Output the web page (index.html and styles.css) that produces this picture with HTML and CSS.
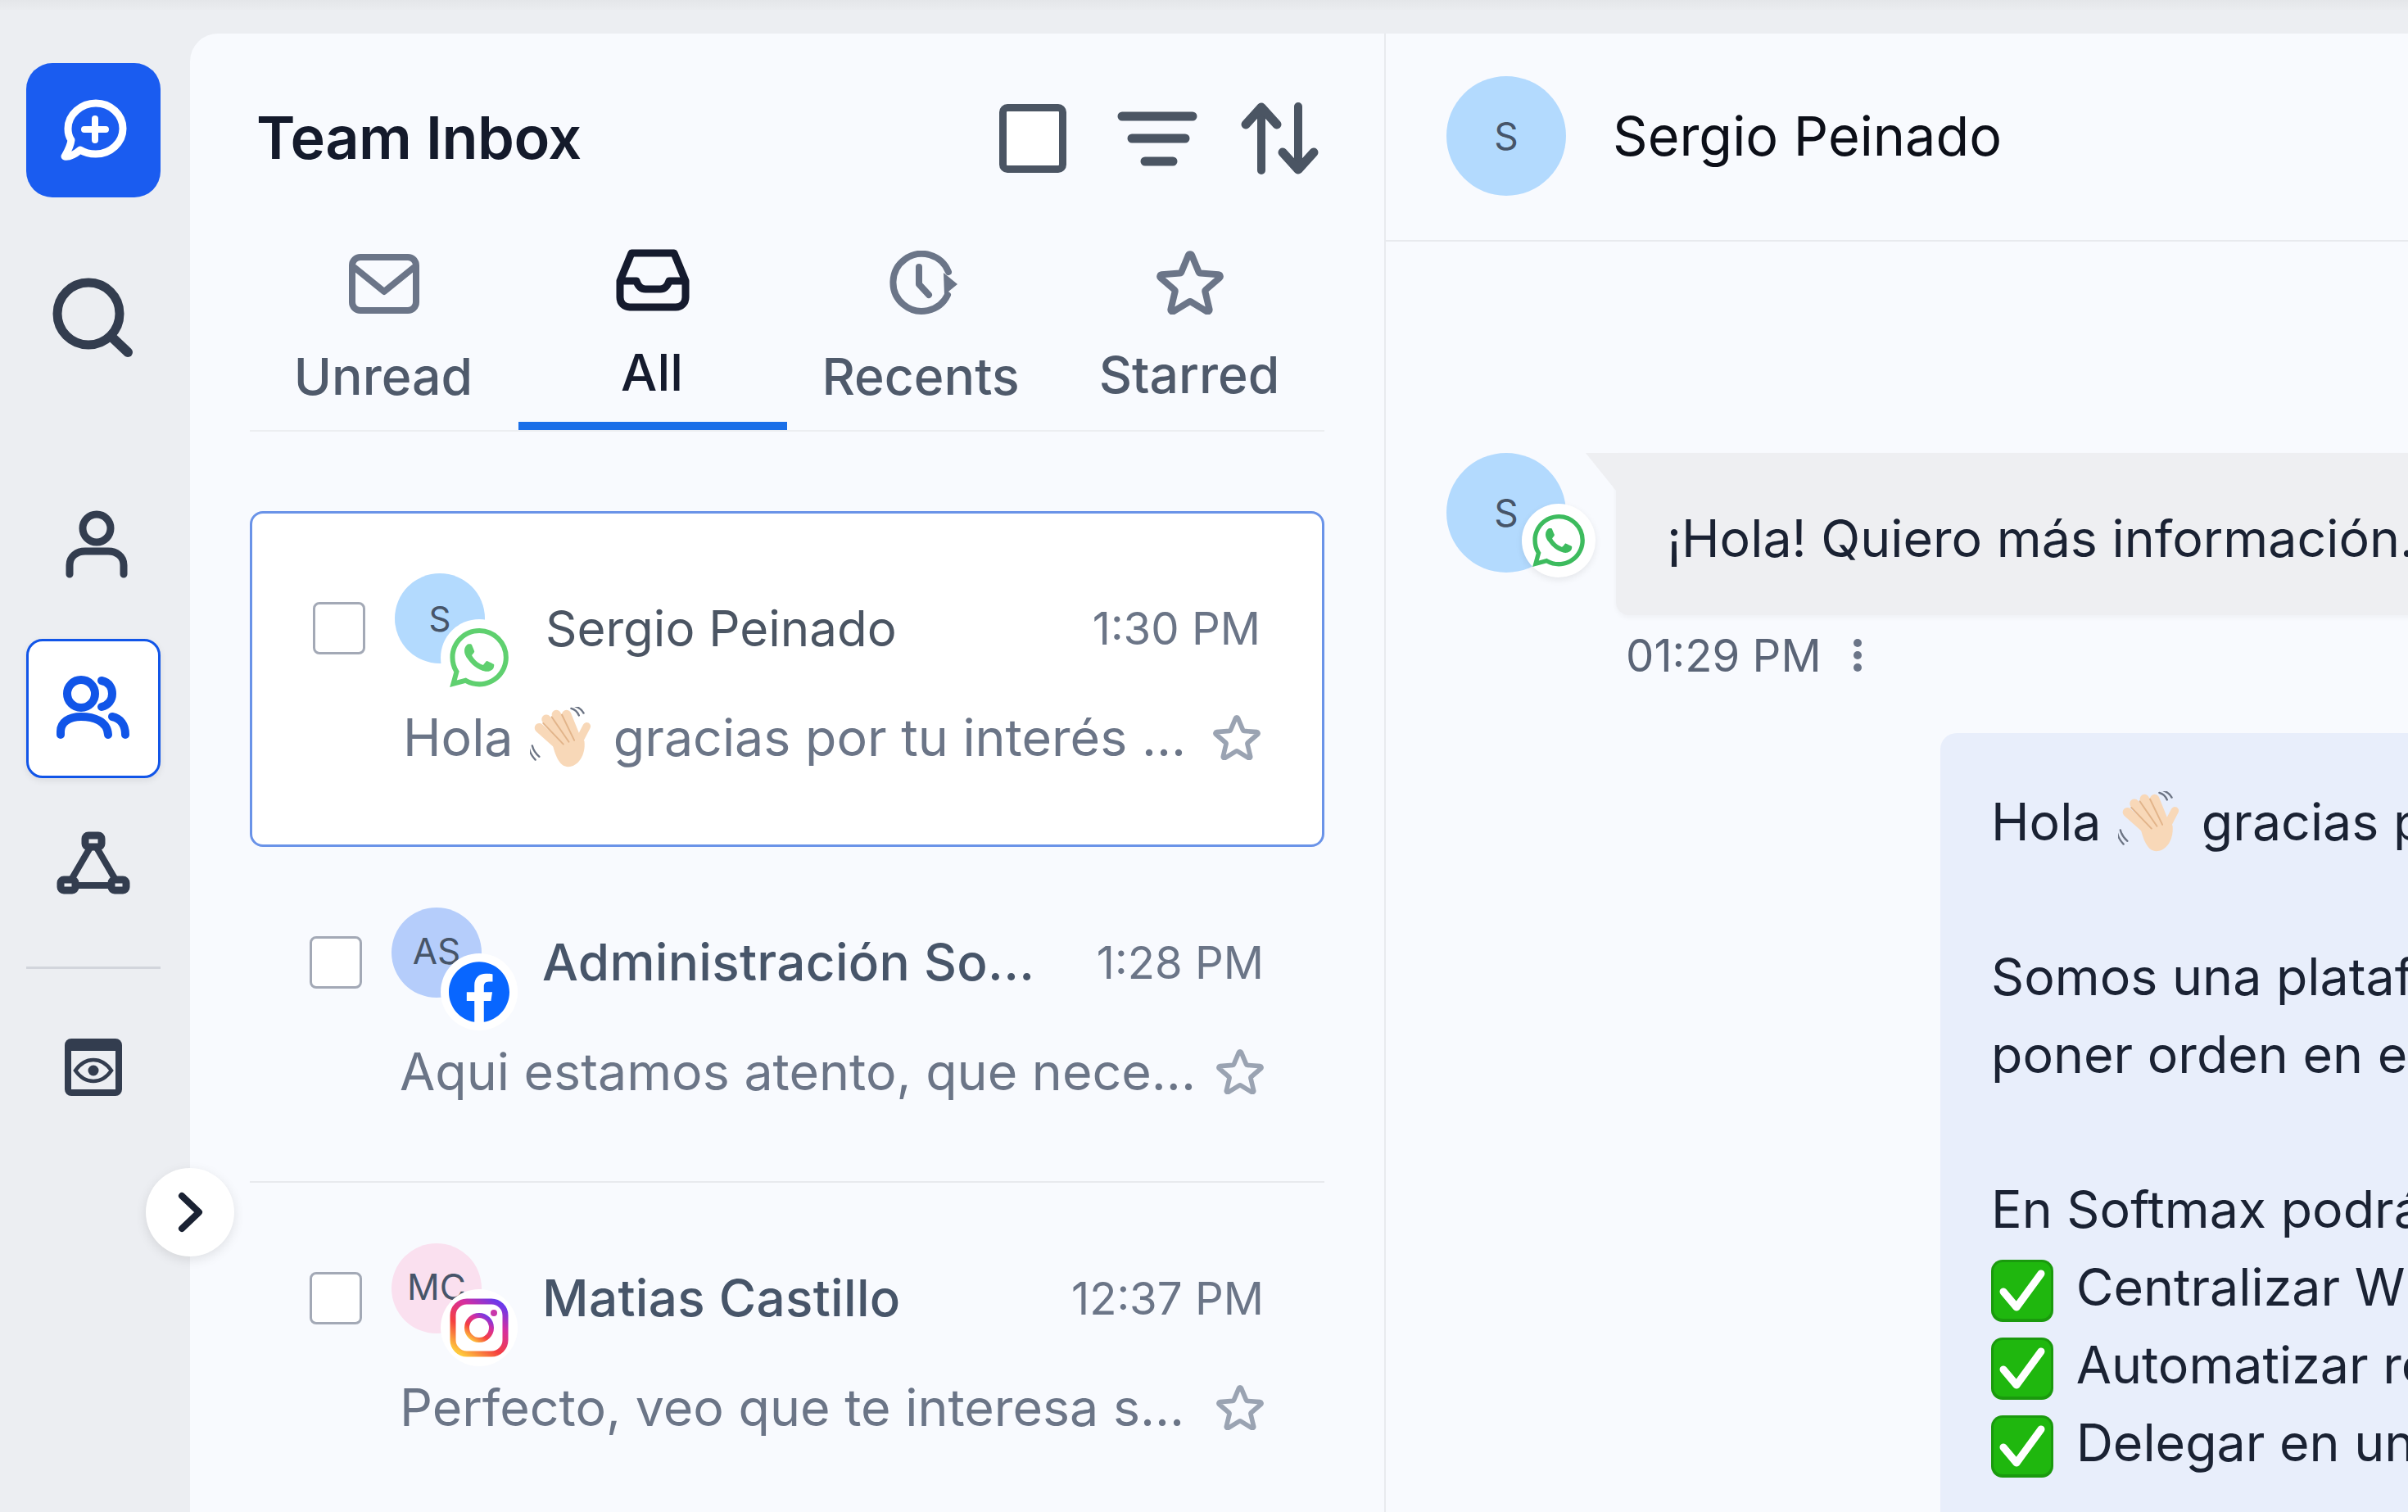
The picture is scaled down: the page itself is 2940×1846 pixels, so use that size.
FILE: index.html
```html
<!DOCTYPE html>
<html lang="en">
<head>
    <meta charset="UTF-8">
    <meta name="viewport" content="width=device-width, initial-scale=1.0">
    <title>Team Inbox</title>
    <link rel="stylesheet" href="styles.css">
</head>
<body>
    <svg class="defs" width="0" height="0">
        <defs>
            <symbol id="star" viewBox="1.8 2.2 20.4 19.2">
                <path fill="none" stroke="currentColor" stroke-width="2" stroke-linejoin="round" d="M11.48 3.499a.562.562 0 011.04 0l2.125 5.111a.563.563 0 00.475.345l5.518.442c.499.04.701.663.321.988l-4.204 3.602a.563.563 0 00-.182.557l1.285 5.385a.562.562 0 01-.84.61l-4.725-2.885a.562.562 0 00-.586 0L6.982 20.54a.562.562 0 01-.84-.61l1.285-5.386a.562.562 0 00-.182-.557l-4.204-3.602a.563.563 0 01.321-.988l5.518-.442a.563.563 0 00.475-.345L11.48 3.5z"/>
            </symbol>
            <symbol id="whatsapp" viewBox="0 0 24 24">
                <path fill="currentColor" d="M17.472 14.382c-.297-.149-1.758-.867-2.03-.967-.273-.099-.471-.148-.67.15-.197.297-.767.966-.94 1.164-.173.199-.347.223-.644.075-.297-.15-1.255-.463-2.39-1.475-.883-.788-1.48-1.761-1.653-2.059-.173-.297-.018-.458.13-.606.134-.133.298-.347.446-.52.149-.174.198-.298.298-.497.099-.198.05-.371-.025-.52-.075-.149-.669-1.612-.916-2.207-.242-.579-.487-.5-.669-.51-.173-.008-.371-.01-.57-.01-.198 0-.52.074-.792.372-.272.297-1.04 1.016-1.04 2.479 0 1.462 1.065 2.875 1.213 3.074.149.198 2.096 3.2 5.077 4.487.709.306 1.262.489 1.694.625.712.227 1.36.195 1.871.118.571-.085 1.758-.719 2.006-1.413.248-.694.248-1.289.173-1.413-.074-.124-.272-.198-.57-.347m-5.421 7.403h-.004a9.87 9.87 0 01-5.031-1.378l-.361-.214-3.741.982.998-3.648-.235-.374a9.86 9.86 0 01-1.51-5.26c.001-5.45 4.436-9.884 9.888-9.884 2.64 0 5.122 1.03 6.988 2.898a9.825 9.825 0 012.893 6.994c-.003 5.45-4.437 9.884-9.885 9.884m8.413-18.297A11.815 11.815 0 0012.05 0C5.495 0 .16 5.335.157 11.892c0 2.096.547 4.142 1.588 5.945L.057 24l6.305-1.654a11.882 11.882 0 005.683 1.448h.005c6.554 0 11.89-5.335 11.893-11.893a11.821 11.821 0 00-3.48-8.413z"/>
            </symbol>
            <symbol id="wave" viewBox="0 0 80 80">
                <g fill="none" stroke-linecap="round">
                    <path stroke="#f8d8b8" stroke-width="12" d="M12 27L40 52M21 16L46 46M34 10L53 44M47 10L60 42"/>
                    <path stroke="#f8d8b8" stroke-width="10" d="M73 25L60 50"/>
                </g>
                <path fill="#f8d8b8" d="M28 44L58 34L70 44C72 62 62 77 49 77C39 77 33 66 28 44Z"/>
                <g fill="none" stroke-linecap="round">
                    <path stroke="#e2b48a" stroke-width="2" d="M17 21L43 48M28 13L50 45M41 10L57 43"/>
                    <path stroke="#6c7484" stroke-width="2.5" d="M53 2Q60 4 63 11M58 -1Q66 2 69 8M3 50Q5 58 12 64M-1 54Q1 62 7 68"/>
                </g>
            </symbol>
            <symbol id="check" viewBox="0 0 76 76">
                <rect x="0" y="0" width="76" height="76" rx="14" fill="#1a9a0d"/>
                <rect x="3" y="3" width="70" height="69" rx="11" fill="#1fb70e"/>
                <path fill="none" stroke="#fff" stroke-width="9" stroke-linecap="round" stroke-linejoin="round" d="M15 39L31 58L61 17"/>
            </symbol>
        </defs>
    </svg>

    <div class="topbar"></div>

    <div class="app">
        <nav class="rail">
            <div class="rail-btn compose">
                <svg width="84" height="78" viewBox="0 0 84 78"><path fill="none" stroke="#fff" stroke-width="9" stroke-linejoin="round" d="M45 6C63 6 78 20 78 37C78 54 63 68 45 68C38 68 32 67 26 63C20 68 13 72 7 71C11 64 14 59 15 51C12 47 11 42 11 37C11 20 27 6 45 6Z"/><path stroke="#fff" stroke-width="8" stroke-linecap="round" d="M44 25V51M31 38H57"/></svg>
            </div>
            <div class="rail-btn search">
                <svg width="100" height="100" viewBox="0 0 100 100"><circle cx="45" cy="45" r="38" fill="none" stroke="#333d4f" stroke-width="11"/><path stroke="#333d4f" stroke-width="12" stroke-linecap="round" d="M74 74L93 92"/></svg>
            </div>
            <div class="rail-btn person">
                <svg width="76" height="84" viewBox="0 0 76 84"><circle cx="38" cy="22" r="17" fill="none" stroke="#333d4f" stroke-width="9"/><path fill="none" stroke="#333d4f" stroke-width="9" stroke-linecap="round" d="M5 78V67C5 56 14 50 24 50H52C62 50 71 56 71 67V78"/></svg>
            </div>
            <div class="rail-btn team">
                <svg width="90" height="80" viewBox="0 0 90 80"><circle cx="30" cy="22" r="17" fill="none" stroke="#1155e8" stroke-width="10"/><path fill="none" stroke="#1155e8" stroke-width="10" stroke-linecap="round" d="M55 6C65 8 68 16 68 22C68 30 63 36 55 38M5 72V68C5 57 15 50 30 50C45 50 62 55 63 72M68 50C78 52 84 60 84 72"/></svg>
            </div>
            <div class="rail-btn network">
                <svg width="90" height="80" viewBox="0 0 90 80"><path fill="none" stroke="#333d4f" stroke-width="8" d="M45 13L14 66H76Z"/><rect x="35" y="5" width="20" height="14" rx="4" fill="#eceef2" stroke="#333d4f" stroke-width="9"/><rect x="5" y="59" width="18" height="13" rx="4" fill="#eceef2" stroke="#333d4f" stroke-width="9"/><rect x="67" y="59" width="18" height="13" rx="4" fill="#eceef2" stroke="#333d4f" stroke-width="9"/></svg>
            </div>
            <div class="rail-line"></div>
            <div class="rail-btn preview-btn">
                <svg width="70" height="70" viewBox="0 0 70 70"><rect x="4" y="4" width="62" height="62" rx="4" fill="none" stroke="#333d4f" stroke-width="8"/><rect x="3" y="3" width="64" height="12" rx="3" fill="#333d4f"/><path fill="none" stroke="#333d4f" stroke-width="4.5" d="M13 39C20 29 27 26 35 26C43 26 50 29 57 39C50 49 43 52 35 52C27 52 20 49 13 39Z"/><circle cx="35" cy="39" r="6.5" fill="#333d4f"/></svg>
            </div>
        </nav>

        <main class="panel">
            <section class="inbox">
                <header class="inbox-head">
                    <h1>Team Inbox</h1>
                    <div class="head-icons">
                        <span class="box-big"></span>
                        <svg width="100" height="70" viewBox="0 0 100 70"><path stroke="#4b5563" stroke-width="11" stroke-linecap="round" d="M8 8H94M20 35H85M36 63H70"/></svg>
                        <svg width="95" height="88" viewBox="0 0 95 88"><path fill="none" stroke="#4b5563" stroke-width="10" stroke-linecap="round" d="M25 83V8M70 5V80"/><path fill="none" stroke="#4b5563" stroke-width="11" stroke-linecap="round" stroke-linejoin="round" d="M6 27L25 6L44 27M51 61L70 82L89 61"/></svg>
                    </div>
                </header>

                <div class="tabs">
                    <div class="tab">
                        <svg width="90" height="80" viewBox="0 0 90 80"><rect x="6" y="8" width="78" height="65" rx="10" fill="none" stroke="#6b7588" stroke-width="8"/><path fill="none" stroke="#6b7588" stroke-width="8" stroke-linejoin="round" d="M8 20L45 50L82 20"/></svg>
                        <span>Unread</span>
                    </div>
                    <div class="tab active">
                        <svg width="90" height="80" viewBox="0 0 90 80"><path fill="none" stroke="#151b2e" stroke-width="9" stroke-linejoin="round" d="M19 8H71L85 42V62C85 69 80 74 73 74H17C10 74 5 69 5 62V42Z"/><path fill="none" stroke="#151b2e" stroke-width="9" stroke-linecap="round" stroke-linejoin="round" d="M6 42H25C27 48 30 52 36 52H54C60 52 63 48 65 42H84"/></svg>
                        <span>All</span>
                    </div>
                    <div class="tab">
                        <svg width="90" height="80" viewBox="0 0 90 80"><path fill="none" stroke="#6b7588" stroke-width="8" stroke-linecap="round" d="M78 26A35 35 0 1 0 77 54"/><path fill="none" stroke="#6b7588" stroke-width="8" stroke-linecap="round" stroke-linejoin="round" d="M42 20V41L54 54"/><path fill="#6b7588" d="M72 27L89 41L73 54Z"/></svg>
                        <span>Recents</span>
                    </div>
                    <div class="tab">
                        <svg class="star-big" width="82" height="78"><use href="#star"/></svg>
                        <span>Starred</span>
                    </div>
                </div>

                <div class="conv-list">
                    <article class="conv selected">
                        <div class="conv-top">
                            <span class="box"></span>
                            <div class="avatar-wrap">
                                <div class="avatar sky">S</div>
                                <div class="badge wa"><svg width="72" height="72"><use href="#whatsapp"/></svg></div>
                            </div>
                            <div class="name">Sergio Peinado</div>
                            <div class="time">1:30 PM</div>
                        </div>
                        <div class="conv-bottom">
                            <div class="preview">Hola <svg class="emoji" width="76" height="76"><use href="#wave"/></svg> gracias por tu interés ...</div>
                            <svg class="star" width="58" height="55"><use href="#star"/></svg>
                        </div>
                    </article>

                    <article class="conv">
                        <div class="conv-top">
                            <span class="box"></span>
                            <div class="avatar-wrap">
                                <div class="avatar periwinkle initials">AS</div>
                                <div class="badge fb">
                                    <svg width="74" height="74" viewBox="0 0 24 24"><circle cx="12" cy="12" r="11" fill="#fff"/><path fill="#0866ff" d="M24 12.073c0-6.627-5.373-12-12-12s-12 5.373-12 12c0 5.99 4.388 10.954 10.125 11.854v-8.385H7.078v-3.47h3.047V9.43c0-3.007 1.792-4.669 4.533-4.669 1.312 0 2.686.235 2.686.235v2.953H15.83c-1.491 0-1.956.925-1.956 1.874v2.25h3.328l-.532 3.47h-2.796v8.385C19.612 23.027 24 18.062 24 12.073z"/></svg>
                                </div>
                            </div>
                            <div class="name strong">Administración So...</div>
                            <div class="time">1:28 PM</div>
                        </div>
                        <div class="conv-bottom">
                            <div class="preview">Aqui estamos atento, que nece...</div>
                            <svg class="star" width="58" height="55"><use href="#star"/></svg>
                        </div>
                    </article>

                    <article class="conv last">
                        <div class="conv-top">
                            <span class="box"></span>
                            <div class="avatar-wrap">
                                <div class="avatar pink initials">MC</div>
                                <div class="badge ig">
                                    <svg width="72" height="72" viewBox="0 0 72 72">
                                        <defs><linearGradient id="ig-grad" x1="0.15" y1="1" x2="0.85" y2="0"><stop offset="0" stop-color="#fec83c"/><stop offset="0.35" stop-color="#f5403f"/><stop offset="0.7" stop-color="#d52ea0"/><stop offset="1" stop-color="#6a39ec"/></linearGradient></defs>
                                        <rect x="4" y="4" width="64" height="64" rx="17" fill="none" stroke="url(#ig-grad)" stroke-width="7"/>
                                        <circle cx="36" cy="36" r="15" fill="none" stroke="url(#ig-grad)" stroke-width="6"/>
                                        <circle cx="54" cy="18" r="4" fill="#c837ab"/>
                                    </svg>
                                </div>
                            </div>
                            <div class="name strong">Matias Castillo</div>
                            <div class="time">12:37 PM</div>
                        </div>
                        <div class="conv-bottom">
                            <div class="preview">Perfecto, veo que te interesa s...</div>
                            <svg class="star" width="58" height="55"><use href="#star"/></svg>
                        </div>
                    </article>
                </div>
            </section>

            <section class="chat">
                <header class="chat-head">
                    <div class="avatar big sky">S</div>
                    <div class="chat-name">Sergio Peinado</div>
                </header>

                <div class="thread">
                    <div class="msg-in">
                        <div class="avatar-wrap msg-avatar">
                            <div class="avatar big sky">S</div>
                            <div class="badge msg-badge"><svg width="64" height="64"><use href="#whatsapp"/></svg></div>
                        </div>
                        <div class="msg-body">
                            <div class="bubble-in">¡Hola! Quiero más información.</div>
                            <div class="msg-meta">
                                <span>01:29 PM</span>
                                <svg width="14" height="44" viewBox="0 0 14 44"><circle cx="7" cy="7" r="5" fill="#6b7588"/><circle cx="7" cy="22" r="5" fill="#6b7588"/><circle cx="7" cy="37" r="5" fill="#6b7588"/></svg>
                            </div>
                        </div>
                    </div>

                    <div class="bubble-out">
                        <div class="line">Hola <svg class="emoji" width="76" height="76"><use href="#wave"/></svg> gracias por tu interés</div>
                        <div class="line"></div>
                        <div class="line">Somos una plataforma</div>
                        <div class="line">poner orden en el caos</div>
                        <div class="line"></div>
                        <div class="line">En Softmax podrás:</div>
                        <div class="line"><svg class="emoji tick" width="76" height="76"><use href="#check"/></svg> Centralizar WhatsApp</div>
                        <div class="line"><svg class="emoji tick" width="76" height="76"><use href="#check"/></svg> Automatizar respuestas</div>
                        <div class="line"><svg class="emoji tick" width="76" height="76"><use href="#check"/></svg> Delegar en un equipo</div>
                    </div>
                </div>
            </section>
        </main>

        <button class="expand">
            <svg width="34" height="52" viewBox="0 0 34 52"><path fill="none" stroke="#1a2233" stroke-width="8" stroke-linecap="round" stroke-linejoin="round" d="M7 6L28 26L7 46"/></svg>
        </button>
    </div>
</body>
</html>
```

FILE: styles.css
```css
html, body {
    margin: 0;
    height: 100%;
    overflow: hidden;
}
body {
    background: #eceef2;
    font-family: Inter, "Liberation Sans", sans-serif;
    color: #1a2233;
}
.defs {
    position: absolute;
}
.topbar {
    height: 12px;
    background: linear-gradient(#e4e6e9, #eaecef);
}
.app {
    position: relative;
    display: flex;
    height: 1834px;
}

/* left rail */
.rail {
    width: 232px;
    flex: none;
    padding: 65px 0 0 32px;
    box-sizing: border-box;
}
.rail-btn {
    width: 164px;
    height: 164px;
    display: flex;
    align-items: center;
    justify-content: center;
    box-sizing: border-box;
}
.compose {
    background: #1a5cf0;
    border-radius: 32px;
}
.search { margin-top: 65px; }
.search svg { margin-left: -2px; }
.person { margin-top: 113px; }
.person svg { margin-left: 8px; }
.team {
    margin-top: 33px;
    height: 170px;
    background: #fff;
    border: 3.5px solid #1155e8;
    border-radius: 20px;
    box-shadow: 0 3px 8px rgba(0, 0, 0, 0.08);
}
.network { margin-top: 23px; }
.rail-line {
    margin-top: 43px;
    width: 164px;
    height: 3px;
    background: #d2d5dc;
}
.preview-btn { margin-top: 38px; }
.expand {
    position: absolute;
    left: 178px;
    top: 1414px;
    width: 108px;
    height: 108px;
    border: none;
    border-radius: 50%;
    background: #fff;
    box-shadow: 0 4px 14px rgba(0, 0, 0, 0.1);
    display: flex;
    align-items: center;
    justify-content: center;
    padding: 0;
}

/* main white panel */
.panel {
    flex: 1;
    min-width: 0;
    margin-top: 29px;
    display: flex;
    background: #f8fafe;
    border-top-left-radius: 34px;
    overflow: hidden;
}
.inbox {
    width: 1460px;
    flex: none;
    box-sizing: border-box;
    padding: 84px 73px 0 73px;
    border-right: 2px solid #e8eaee;
}
.inbox-head {
    height: 87px;
    display: flex;
    align-items: center;
    justify-content: space-between;
    padding: 0 7px 0 8px;
}
.inbox-head h1 {
    margin: -2px 0 0;
    font-size: 72px;
    font-weight: 600;
    letter-spacing: -0.5px;
    color: #141a2b;
}
.head-icons {
    display: flex;
    align-items: center;
    gap: 53px;
}
.box-big {
    width: 82px;
    height: 84px;
    margin-right: 7px;
    box-sizing: border-box;
    background: #fff;
    border: 9px solid #4b5563;
    border-radius: 10px;
}

/* tabs */
.tabs {
    margin-top: 88px;
    display: grid;
    grid-template-columns: repeat(4, 1fr);
    border-bottom: 2px solid #eceef1;
}
.tab {
    height: 225px;
    box-sizing: border-box;
    padding-top: 6px;
    border-bottom: 10px solid transparent;
    display: flex;
    flex-direction: column;
    align-items: center;
    font-size: 62.5px;
    font-weight: 500;
    color: #4f5a6b;
}
.tab svg {
    flex: none;
}
.tab span {
    margin: 38px 2px 0 0;
    line-height: 70px;
}
.tab.active {
    padding-top: 1px;
    border-bottom-color: #1a6fe8;
    color: #151b2e;
}
.star-big {
    color: #6b7588;
}

/* conversation rows */
.conv-list {
    margin-top: 97px;
}
.conv {
    height: 410px;
    box-sizing: border-box;
    padding: 74px 74px 0 73px;
    border-bottom: 2px solid #e8eaee;
}
.conv.selected {
    padding: 73px 75px 0 74px;
    background: #fff;
    border: 3px solid #6a93e8;
    border-radius: 16px;
}
.conv.last {
    border-bottom: none;
}
.conv-top {
    display: flex;
    align-items: center;
    height: 134px;
}
.box {
    width: 64px;
    height: 64px;
    flex: none;
    box-sizing: border-box;
    background: #fff;
    border: 3.5px solid #a3a9b6;
    border-radius: 8px;
}
.avatar-wrap {
    position: relative;
    width: 110px;
    height: 134px;
    flex: none;
    margin-left: 36px;
}
.avatar {
    width: 110px;
    height: 110px;
    border-radius: 50%;
    display: flex;
    align-items: center;
    justify-content: center;
    font-size: 42px;
    color: #475569;
}
.avatar.initials {
    box-sizing: border-box;
    padding-bottom: 4px;
    font-size: 44px;
}
.avatar.big {
    width: 146px;
    height: 146px;
    flex: none;
    font-size: 46px;
}
.sky { background: #b3dafe; }
.periwinkle { background: #b5cdfb; }
.pink { background: #fae0ef; }
.badge {
    position: absolute;
    left: 60px;
    top: 56px;
    width: 94px;
    height: 94px;
    border-radius: 50%;
    background: #fff;
    display: flex;
    align-items: center;
    justify-content: center;
}
.badge.wa {
    left: 56px;
    color: #5fd06f;
}
.name {
    margin-left: 74px;
    flex: 1;
    font-size: 60px;
    color: #4b5563;
}
.name.strong {
    margin-top: -2px;
    font-size: 62px;
    letter-spacing: 0.3px;
    font-weight: 500;
    color: #475569;
}
.time {
    font-size: 54.5px;
    color: #6b7587;
}
.conv-bottom {
    margin: 30px 0 0 110px;
    height: 72px;
    display: flex;
    align-items: center;
    justify-content: space-between;
}
.preview {
    font-size: 62.7px;
    color: #6b7587;
    white-space: nowrap;
}
.star {
    flex: none;
    color: #9aa3b2;
}
.emoji {
    vertical-align: -16px;
    margin: 0 8px 0 3px;
}
.emoji.tick {
    vertical-align: -20px;
    margin: 0 10px 0 0;
}

/* chat side */
.chat {
    flex: 1;
    min-width: 0;
    overflow: hidden;
}
.chat-head {
    height: 254px;
    box-sizing: border-box;
    padding: 0 0 2px 74px;
    border-bottom: 2px solid #e8eaee;
    display: flex;
    align-items: center;
}
.chat-name {
    margin-left: 57px;
    font-size: 66.5px;
    color: #0c0f18;
}
.thread {
    padding: 258px 0 0 74px;
    white-space: nowrap;
}
.msg-in {
    display: flex;
}
.msg-avatar {
    width: 146px;
    height: 146px;
    margin-left: 0;
}
.msg-badge {
    left: 92px;
    top: 62px;
    width: 90px;
    height: 90px;
    color: #3dbb5e;
    box-shadow: 0 3px 8px rgba(0, 0, 0, 0.08);
}
.msg-body {
    margin-left: 61px;
}
.bubble-in {
    position: relative;
    width: 1000px;
    height: 198px;
    box-sizing: border-box;
    padding: 66px 0 0 62px;
    background: #eeeff2;
    border-radius: 0 0 16px 16px;
    box-shadow: 0 3px 6px rgba(0, 0, 0, 0.04);
    font-size: 62.7px;
    color: #1a2233;
}
.bubble-in::before {
    content: "";
    position: absolute;
    left: -37px;
    top: 0;
    border-top: 46px solid #eeeff2;
    border-left: 37px solid transparent;
}
.msg-meta {
    margin: 16px 0 0 12px;
    display: flex;
    align-items: center;
    gap: 37px;
    font-size: 54.5px;
    color: #5b6577;
}
.bubble-out {
    width: 1000px;
    margin: 62px 0 0 603px;
    padding: 61px 0 60px 62px;
    box-sizing: border-box;
    background: #e8eefb;
    border-radius: 20px;
}
.line {
    height: 94.7px;
    line-height: 94.7px;
    font-size: 62.7px;
    color: #1a2233;
}
```
